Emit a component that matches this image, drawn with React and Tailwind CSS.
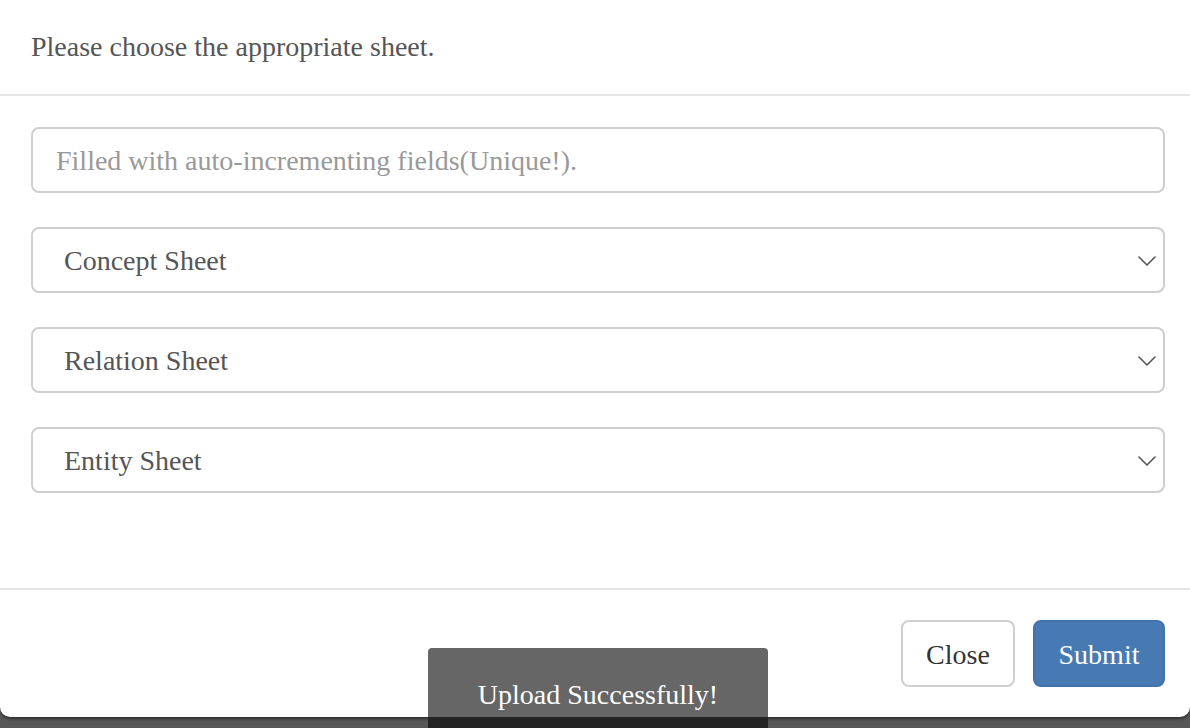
import React from 'react';

const serif = { fontFamily: '"Liberation Serif", "Times New Roman", serif' };

const Chevron = () => (
  <svg width="18" height="10" viewBox="0 0 18 10" fill="none" className="shrink-0">
    <polyline points="1,1 9,9 17,1" stroke="#555" strokeWidth="1.6" strokeLinejoin="round" strokeLinecap="round" />
  </svg>
);

const SheetSelect = ({ label }) => (
  <div className="mb-[34px] flex h-[66px] w-full items-center justify-between rounded-[8px] border-2 border-[#cfcfcf] bg-white pl-[31px] pr-[7px] pt-[2px] text-[28px] text-[#555]">
    <span>{label}</span>
    <Chevron />
  </div>
);

const App = () => {
  const sheets = ['Concept Sheet', 'Relation Sheet', 'Entity Sheet'];

  return (
    <div className="relative h-[728px] w-full overflow-hidden bg-[#575757]" style={serif}>
      <div className="flex h-[717px] w-full flex-col rounded-b-[10px] bg-white shadow-[0_2px_3px_rgba(0,0,0,0.45)]">
        {/* header */}
        <div className="flex h-[96px] items-center border-b-2 border-[#e5e5e5] px-[31px]">
          <h4 className="text-[28px] text-[#555]">Please choose the appropriate sheet.</h4>
        </div>

        {/* body */}
        <div className="flex-1 pl-[31px] pr-[25px] pt-[31px]">
          <input
            type="text"
            placeholder="Filled with auto-incrementing fields(Unique!)."
            className="mb-[34px] h-[66px] w-full rounded-[8px] border-2 border-[#cfcfcf] px-[23px] pt-[2px] text-[28px] text-[#555] outline-none placeholder:text-[#999]"
            style={serif}
          />
          {sheets.map((s) => (
            <SheetSelect key={s} label={s} />
          ))}
        </div>

        {/* footer */}
        <div className="flex h-[129px] items-start justify-end gap-[18px] border-t-2 border-[#e5e5e5] pl-[31px] pr-[25px] pt-[30px]">
          <button className="h-[67px] w-[114px] rounded-[8px] border-2 border-[#cfcfcf] bg-white pt-[2px] text-[28px] text-[#333]" style={serif}>
            Close
          </button>
          <button className="h-[67px] w-[132px] rounded-[8px] border-2 border-[#4272ab] bg-[#4779b3] pt-[2px] text-[28px] text-white" style={serif}>
            Submit
          </button>
        </div>
      </div>

      {/* toast */}
      <div className="absolute left-[428px] top-[648px] w-[340px]">
        <div className="h-[69px] rounded-t-[4px] bg-[#666] pt-[30px] text-center text-[28px] leading-[34px] text-white">
          Upload Successfully!
        </div>
        <div className="h-[11px] bg-[#232323]" />
      </div>
    </div>
  );
};

export default App;
